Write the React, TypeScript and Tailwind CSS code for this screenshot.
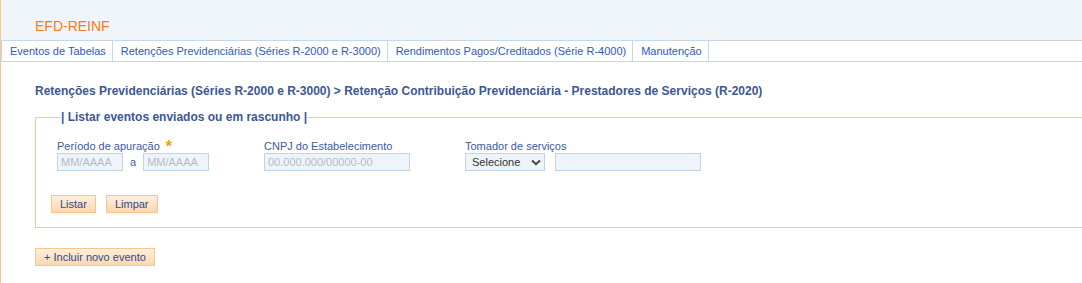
import React from "react";

const font = { fontFamily: '"Liberation Sans", Arial, sans-serif' };

function Tab({ label }: { label: string }) {
  return (
    <div className="flex items-center h-full pl-[8px] pr-[6px] border-r border-[#c3d9ea] text-[11px] text-[#3157c2] whitespace-nowrap">
      {label}
    </div>
  );
}

function TextInput({ w, placeholder }: { w: string; placeholder?: string }) {
  return (
    <div
      className={`${w} h-[18px] bg-[#eef4f9] border border-[#bcd5e8] flex items-center px-[3px] text-[11px] text-[#b4bcc6]`}
    >
      {placeholder}
    </div>
  );
}

function Btn({ label }: { label: string }) {
  return (
    <div className="h-[18px] flex items-center px-[8px] border border-[#fcc48b] bg-gradient-to-b from-[#fef0df] to-[#fcd7ae] text-[11px] text-[#2d4a86]">
      {label}
    </div>
  );
}

export default function App() {
  return (
    <div style={font} className="w-[1082px] h-[283px] overflow-hidden bg-white border-l border-[#fdc68c] flex flex-col">
      {/* header */}
      <div className="h-[40px] bg-[#f0f5fa] flex items-end pl-[34px] pb-[6px]">
        <span className="text-[14px] leading-[16px] text-[#f47b20]">EFD-REINF</span>
      </div>
      {/* tabs */}
      <div className="h-[22px] flex border-t border-b border-[#c3d9ea] border-l">
        <Tab label="Eventos de Tabelas" />
        <Tab label="Retenções Previdenciárias (Séries R-2000 e R-3000)" />
        <Tab label="Rendimentos Pagos/Creditados (Série R-4000)" />
        <Tab label="Manutenção" />
      </div>
      {/* content */}
      <div className="pl-[34px] pt-[22px] flex flex-col">
        <div className="text-[12px] leading-[14px] font-bold text-[#3b5794] whitespace-nowrap">
          Retenções Previdenciárias (Séries R-2000 e R-3000) &gt; Retenção Contribuição Previdenciária - Prestadores de Serviços (R-2020)
        </div>
        <fieldset className="mt-[12px] border border-[#fdc68c] w-[1100px] h-[118px] pl-[15px]">
          <legend className="ml-[10px] text-[12px] leading-[14px] font-bold text-[#3b5794]">
            | Listar eventos enviados ou em rascunho |
          </legend>
          <div className="flex pl-[6px] pt-[16px]">
            <div className="w-[207px] flex flex-col">
              <div className="text-[11px] leading-[12px] text-[#3c5a9c] h-[12px] flex">
                Período de apuração
                <span className="ml-[6px] text-[#f7941d] text-[16px] leading-[14px] font-bold">*</span>
              </div>
              <div className="flex items-center mt-[1px]">
                <TextInput w="w-[66px]" placeholder="MM/AAAA" />
                <span className="mx-[7px] text-[11px] text-[#3c5a9c]">a</span>
                <TextInput w="w-[66px]" placeholder="MM/AAAA" />
              </div>
            </div>
            <div className="w-[201px] flex flex-col">
              <div className="text-[11px] leading-[12px] text-[#3c5a9c] h-[12px]">CNPJ do Estabelecimento</div>
              <div className="flex mt-[1px]">
                <TextInput w="w-[146px]" placeholder="00.000.000/00000-00" />
              </div>
            </div>
            <div className="flex flex-col">
              <div className="text-[11px] leading-[12px] text-[#3c5a9c] h-[12px]">Tomador de serviços</div>
              <div className="flex mt-[1px] gap-[10px]">
                <div className="w-[80px] h-[18px] bg-[#eef4f9] border border-[#bcd5e8] flex items-center justify-between pl-[6px] pr-[3px] text-[11px] text-[#333]">
                  <span>Selecione</span>
                  <svg width="10" height="7" viewBox="0 0 10 7">
                    <path d="M1 1.5 L5 5.2 L9 1.5" fill="none" stroke="#444" strokeWidth="2" />
                  </svg>
                </div>
                <TextInput w="w-[146px]" />
              </div>
            </div>
          </div>
          <div className="flex gap-[10px] mt-[24px]">
            <Btn label="Listar" />
            <Btn label="Limpar" />
          </div>
        </fieldset>
        <div className="flex mt-[20px]">
          <Btn label="+ Incluir novo evento" />
        </div>
      </div>
    </div>
  );
}
